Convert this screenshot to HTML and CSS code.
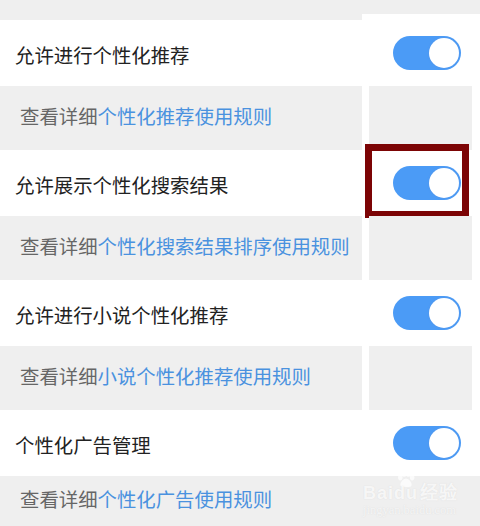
FILE: index.html
```html
<!DOCTYPE html>
<html lang="zh-CN">
<head>
  <meta charset="UTF-8" />
  <meta name="viewport" content="width=device-width, initial-scale=1.0"/>
  <title>个性化推荐设置</title>
  <link rel="stylesheet" href="styles.css">
</head>
<body>

  <div class="top-band"></div>
  <div class="top-step">
    <div class="step-left"></div>
    <div class="step-right"></div>
  </div>

  <div class="row">
    <div class="label">允许进行个性化推荐</div>
    <div class="side"><span class="toggle on"></span></div>
  </div>
  <div class="info">
    <div class="info-text">查看详细<a href="#">个性化推荐使用规则</a></div>
    <div class="info-side"></div>
  </div>

  <div class="row">
    <div class="label">允许展示个性化搜索结果</div>
    <div class="side">
      <span class="toggle on"></span>
      <span class="mark"></span>
    </div>
  </div>
  <div class="info">
    <div class="info-text">查看详细<a href="#">个性化搜索结果排序使用规则</a></div>
    <div class="info-side"></div>
  </div>

  <div class="row">
    <div class="label">允许进行小说个性化推荐</div>
    <div class="side"><span class="toggle on"></span></div>
  </div>
  <div class="info">
    <div class="info-text">查看详细<a href="#">小说个性化推荐使用规则</a></div>
    <div class="info-side"></div>
  </div>

  <div class="row">
    <div class="label">个性化广告管理</div>
    <div class="side"><span class="toggle on"></span></div>
  </div>
  <div class="info last">
    <div class="info-text">查看详细<a href="#">个性化广告使用规则</a></div>
    <div class="info-side">
      <div class="watermark">
        <svg class="paw" width="26" height="17" viewBox="0 0 22 18">
          <ellipse cx="5" cy="7" rx="2.4" ry="3" />
          <ellipse cx="9" cy="3.2" rx="2.4" ry="3" />
          <ellipse cx="13.5" cy="3.2" rx="2.4" ry="3" />
          <ellipse cx="17.5" cy="7" rx="2.4" ry="3" />
          <path d="M11 8c-3 0-6 4-6 6.5 0 2 2 2.5 6 2.5s6-.5 6-2.5C17 12 14 8 11 8z" />
        </svg>
        <div class="wm-logo">Bai<span class="du">du</span>经验</div>
        <div class="wm-url">jingyan.baidu.com</div>
      </div>
    </div>
  </div>

</body>
</html>
```

FILE: styles.css
```css
body {
  margin: 0;
  width: 480px;
  background: #fff;
  font-family: "Noto Sans CJK SC", "Noto Sans", sans-serif;
  overflow: hidden;
}
.top-band {
  height: 14px;
  background: #efefef;
}
.top-step {
  display: flex;
  height: 6px;
}
.step-left {
  width: 362px;
  background: #efefef;
}
.step-right {
  flex: 1;
  background: #fff;
}
.row {
  display: flex;
  height: 66px;
  background: #fff;
}
.label {
  width: 362px;
  padding-left: 15px;
  box-sizing: border-box;
  display: flex;
  align-items: center;
  font-size: 19.4px;
  color: #222;
  padding-top: 2px;
}
.side {
  position: relative;
  flex: 1;
  display: flex;
  align-items: center;
  padding-left: 31px;
}
.toggle {
  position: relative;
  display: block;
  width: 68px;
  height: 34px;
  border-radius: 17px;
  background: #4b9bf6;
}
.toggle.on::after {
  content: "";
  position: absolute;
  top: 2px;
  right: 2px;
  width: 30px;
  height: 30px;
  border-radius: 50%;
  background: #fff;
  box-shadow: 0 0 1px 1px rgba(90, 150, 230, 0.35);
}
.mark {
  position: absolute;
  left: 3px;
  top: -6px;
  width: 90px;
  height: 60px;
  border: 7px solid #7c0405;
}
.info {
  display: flex;
  height: 64px;
}
.info-text {
  width: 362px;
  box-sizing: border-box;
  padding-left: 20px;
  padding-bottom: 6px;
  display: flex;
  align-items: center;
  background: #efefef;
  font-size: 19.4px;
  color: #666;
}
.info-text a {
  color: #4a92df;
  text-decoration: none;
}
.info-side {
  position: relative;
  width: 103px;
  margin-left: 7px;
  background: #efefef;
}
.info.last {
  height: 50px;
}
.info.last .info-side {
  margin-left: 0;
  flex: 1;
}
.watermark {
  position: absolute;
  left: 1px;
  top: -5px;
  color: rgba(255, 255, 255, 0.8);
  text-shadow: 0 0 1px rgba(200, 200, 200, 0.6);
}
.paw {
  display: block;
  margin-left: 30px;
  fill: rgba(255, 255, 255, 0.75);
}
.wm-logo {
  font-family: "Liberation Sans", sans-serif;
  font-weight: bold;
  font-size: 18px;
  line-height: 18px;
  letter-spacing: 1px;
  margin-top: -4px;
}
.wm-logo .du {
  margin-right: 2px;
}
.wm-url {
  font-family: "Liberation Serif", serif;
  font-size: 12.5px;
  line-height: 16px;
  color: rgba(255, 255, 255, 0.7);
}
```
